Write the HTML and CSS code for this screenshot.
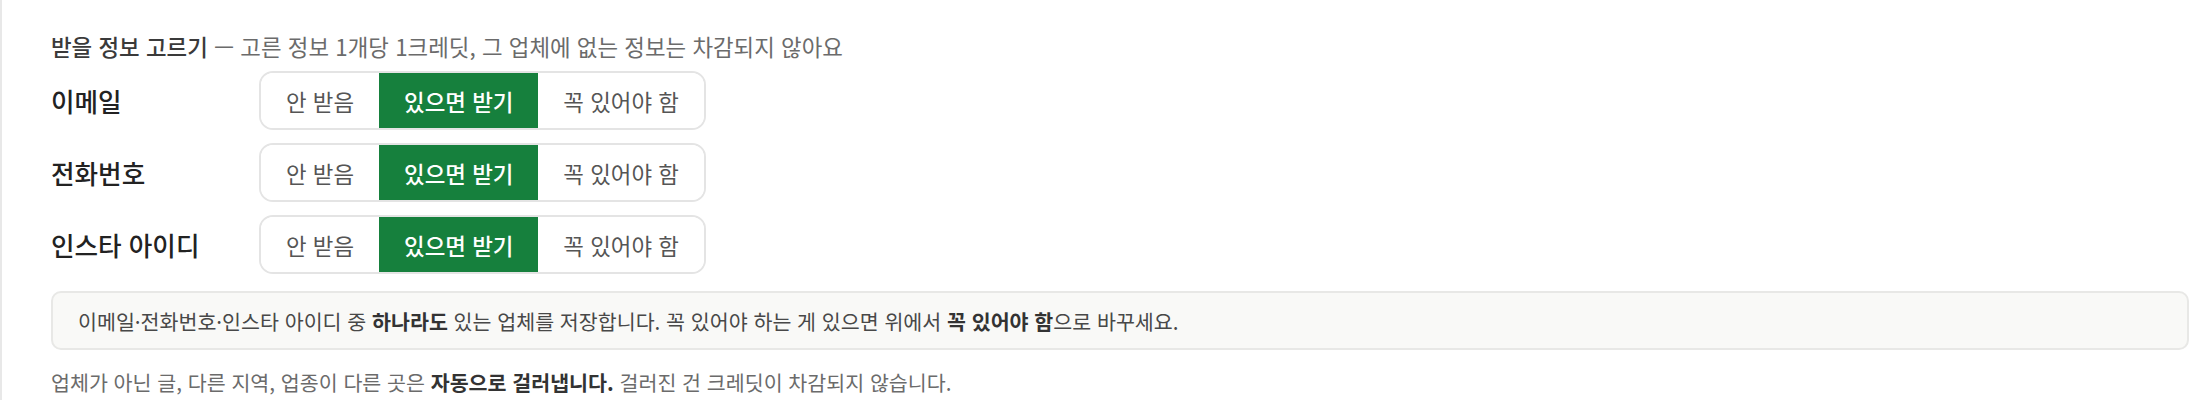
FILE: index.html
```html
<!DOCTYPE html>
<html lang="ko">
<head>
<meta charset="utf-8">
<title>받을 정보 고르기</title>
<link rel="stylesheet" href="styles.css">
</head>
<body>
<div class="panel">
  <p class="title"><strong>받을 정보 고르기</strong> — 고른 정보 1개당 1크레딧, 그 업체에 없는 정보는 차감되지 않아요</p>
  <div class="rows">
    <div class="row">
      <span class="label">이메일</span>
      <div class="seg">
        <span class="opt">안 받음</span>
        <span class="opt active">있으면 받기</span>
        <span class="opt">꼭 있어야 함</span>
      </div>
    </div>
    <div class="row">
      <span class="label">전화번호</span>
      <div class="seg">
        <span class="opt">안 받음</span>
        <span class="opt active">있으면 받기</span>
        <span class="opt">꼭 있어야 함</span>
      </div>
    </div>
    <div class="row">
      <span class="label">인스타 아이디</span>
      <div class="seg">
        <span class="opt">안 받음</span>
        <span class="opt active">있으면 받기</span>
        <span class="opt">꼭 있어야 함</span>
      </div>
    </div>
  </div>
  <div class="note">이메일·전화번호·인스타 아이디 중 <strong>하나라도</strong> 있는 업체를 저장합니다. 꼭 있어야 하는 게 있으면 위에서 <strong>꼭 있어야 함</strong>으로 바꾸세요.</div>
  <p class="foot">업체가 아닌 글, 다른 지역, 업종이 다른 곳은 <strong>자동으로 걸러냅니다.</strong> 걸러진 건 크레딧이 차감되지 않습니다.</p>
</div>
</body>
</html>
```
FILE: styles.css
```css
html, body {
  margin: 0;
  padding: 0;
  background: #ffffff;
}

body {
  font-family: "Noto Sans CJK KR", "Noto Sans", sans-serif;
  color: #333333;
}

.panel {
  border-left: 2px solid #e8e8e8;
  min-height: 400px;
  box-sizing: border-box;
  padding: 31px 21px 0 49px;
}

.title {
  margin: 0;
  font-size: 22.4px;
  line-height: 30px;
  color: #6b6b6b;
}

.title strong {
  font-weight: 500;
  color: #3a3a3a;
}

.rows {
  margin-top: 10px;
  display: flex;
  flex-direction: column;
  gap: 13px;
}

.row {
  display: flex;
  align-items: center;
}

.label {
  width: 208px;
  flex: none;
  font-size: 25.6px;
  font-weight: 500;
  color: #222222;
  line-height: 30px;
}

.seg {
  display: flex;
  border: 2px solid #e4e4e4;
  border-radius: 14px;
  overflow: hidden;
  height: 55px;
}

.opt {
  display: flex;
  align-items: center;
  padding: 0 25px;
  font-size: 22.4px;
  color: #555555;
  background: #ffffff;
}

.opt.active {
  background: #16803d;
  color: #ffffff;
  font-weight: 500;
}

.note {
  margin-top: 17px;
  background: #f9f9f7;
  border: 2px solid #e8e8e6;
  border-radius: 10px;
  padding: 13.5px 25px;
  font-size: 20.6px;
  line-height: 28px;
  color: #484848;
}

.note strong {
  font-weight: 700;
  color: #333333;
}

.foot {
  margin: 17px 0 0;
  font-size: 20.6px;
  line-height: 30px;
  color: #6b6b6b;
}

.foot strong {
  font-weight: 700;
  color: #333333;
}
```
